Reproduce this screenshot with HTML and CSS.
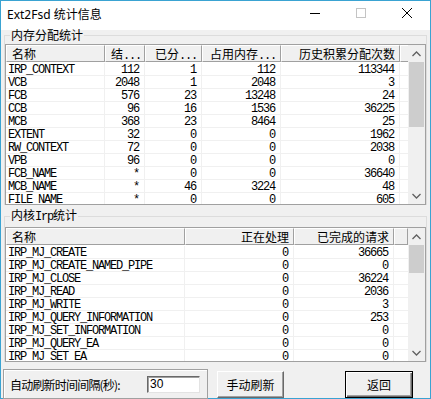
FILE: index.html
```html
<!DOCTYPE html>
<html lang="zh-CN">
<head>
    <meta charset="UTF-8">
    <title>Ext2Fsd 统计信息</title>
    <link rel="stylesheet" href="styles.css">
</head>
<body>
<div class="window">
    <!-- Title bar -->
    <div class="titlebar">
        <div class="title">Ext2Fsd 统计信息</div>
        <div class="caption-btn">
            <svg width="46" height="29"><path d="M18 12.5H28" stroke="#000" stroke-width="1"/></svg>
        </div>
        <div class="caption-btn">
            <svg width="46" height="29"><rect x="18.5" y="7.5" width="9" height="9" fill="none" stroke="#c4c4c4"/></svg>
        </div>
        <div class="caption-btn">
            <svg width="46" height="29"><path d="M18 7L28 17M28 7L18 17" stroke="#000" stroke-width="1"/></svg>
        </div>
    </div>

    <!-- Memory allocation -->
    <fieldset class="group group-mem">
        <legend>内存分配统计</legend>
        <div class="list list-mem">
            <div class="list-body">
                <div class="head">
                    <div class="hc col-name">名称</div>
                    <div class="hc num col-size">结<span class="dots">...</span></div>
                    <div class="hc num col-count">已分<span class="dots">...</span></div>
                    <div class="hc num col-mem">占用内存<span class="dots">...</span></div>
                    <div class="hc num col-total">历史积累分配次数</div>
                    <div class="hc fill"></div>
                </div>
                <div class="row"><div class="cell col-name">IRP_CONTEXT</div><div class="cell num col-size">112</div><div class="cell num col-count">1</div><div class="cell num col-mem">112</div><div class="cell num col-total">113344</div></div>
                <div class="row"><div class="cell col-name">VCB</div><div class="cell num col-size">2048</div><div class="cell num col-count">1</div><div class="cell num col-mem">2048</div><div class="cell num col-total">3</div></div>
                <div class="row"><div class="cell col-name">FCB</div><div class="cell num col-size">576</div><div class="cell num col-count">23</div><div class="cell num col-mem">13248</div><div class="cell num col-total">24</div></div>
                <div class="row"><div class="cell col-name">CCB</div><div class="cell num col-size">96</div><div class="cell num col-count">16</div><div class="cell num col-mem">1536</div><div class="cell num col-total">36225</div></div>
                <div class="row"><div class="cell col-name">MCB</div><div class="cell num col-size">368</div><div class="cell num col-count">23</div><div class="cell num col-mem">8464</div><div class="cell num col-total">25</div></div>
                <div class="row"><div class="cell col-name">EXTENT</div><div class="cell num col-size">32</div><div class="cell num col-count">0</div><div class="cell num col-mem">0</div><div class="cell num col-total">1962</div></div>
                <div class="row"><div class="cell col-name">RW_CONTEXT</div><div class="cell num col-size">72</div><div class="cell num col-count">0</div><div class="cell num col-mem">0</div><div class="cell num col-total">2038</div></div>
                <div class="row"><div class="cell col-name">VPB</div><div class="cell num col-size">96</div><div class="cell num col-count">0</div><div class="cell num col-mem">0</div><div class="cell num col-total">0</div></div>
                <div class="row"><div class="cell col-name">FCB_NAME</div><div class="cell num col-size">*</div><div class="cell num col-count">0</div><div class="cell num col-mem">0</div><div class="cell num col-total">36640</div></div>
                <div class="row"><div class="cell col-name">MCB_NAME</div><div class="cell num col-size">*</div><div class="cell num col-count">46</div><div class="cell num col-mem">3224</div><div class="cell num col-total">48</div></div>
                <div class="row"><div class="cell col-name">FILE_NAME</div><div class="cell num col-size">*</div><div class="cell num col-count">0</div><div class="cell num col-mem">0</div><div class="cell num col-total">605</div></div>
            </div>
            <div class="vscroll">
                <div class="arrow"><svg width="9" height="6"><path d="M0.5 5L4.5 1L8.5 5" fill="none" stroke="#606060" stroke-width="1.3"/></svg></div>
                <div class="track"><div class="thumb"></div></div>
                <div class="arrow"><svg width="9" height="6"><path d="M0.5 1L4.5 5L8.5 1" fill="none" stroke="#606060" stroke-width="1.3"/></svg></div>
            </div>
        </div>
    </fieldset>

    <!-- Kernel IRP -->
    <fieldset class="group group-irp">
        <legend>内核<span class="mono">Irp</span>统计</legend>
        <div class="list list-irp">
            <div class="list-body">
                <div class="head">
                    <div class="hc col-irp">名称</div>
                    <div class="hc num col-busy">正在处理</div>
                    <div class="hc num col-done">已完成的请求</div>
                    <div class="hc fill"></div>
                </div>
                <div class="row"><div class="cell col-irp">IRP_MJ_CREATE</div><div class="cell num col-busy">0</div><div class="cell num col-done">36665</div></div>
                <div class="row"><div class="cell col-irp">IRP_MJ_CREATE_NAMED_PIPE</div><div class="cell num col-busy">0</div><div class="cell num col-done">0</div></div>
                <div class="row"><div class="cell col-irp">IRP_MJ_CLOSE</div><div class="cell num col-busy">0</div><div class="cell num col-done">36224</div></div>
                <div class="row"><div class="cell col-irp">IRP_MJ_READ</div><div class="cell num col-busy">0</div><div class="cell num col-done">2036</div></div>
                <div class="row"><div class="cell col-irp">IRP_MJ_WRITE</div><div class="cell num col-busy">0</div><div class="cell num col-done">3</div></div>
                <div class="row"><div class="cell col-irp">IRP_MJ_QUERY_INFORMATION</div><div class="cell num col-busy">0</div><div class="cell num col-done">253</div></div>
                <div class="row"><div class="cell col-irp">IRP_MJ_SET_INFORMATION</div><div class="cell num col-busy">0</div><div class="cell num col-done">0</div></div>
                <div class="row"><div class="cell col-irp">IRP_MJ_QUERY_EA</div><div class="cell num col-busy">0</div><div class="cell num col-done">0</div></div>
                <div class="row"><div class="cell col-irp">IRP_MJ_SET_EA</div><div class="cell num col-busy">0</div><div class="cell num col-done">0</div></div>
            </div>
            <div class="vscroll">
                <div class="arrow"><svg width="9" height="6"><path d="M0.5 5L4.5 1L8.5 5" fill="none" stroke="#606060" stroke-width="1.3"/></svg></div>
                <div class="track"><div class="thumb"></div></div>
                <div class="arrow"><svg width="9" height="6"><path d="M0.5 1L4.5 5L8.5 1" fill="none" stroke="#606060" stroke-width="1.3"/></svg></div>
            </div>
        </div>
    </fieldset>

    <!-- Bottom controls -->
    <div class="bottom">
        <div class="interval">
            <label for="interval">自动刷新时间间隔(秒):</label>
            <input type="text" id="interval" value="30">
        </div>
        <button class="btn btn-refresh">手动刷新</button>
        <button class="btn btn-back">返回</button>
    </div>
</div>
</body>
</html>
```

FILE: styles.css
```css
body {
    margin: 0;
    font-family: "Noto Sans CJK SC", sans-serif;
    font-size: 12px;
    color: #000;
}
.window {
    width: 431px;
    height: 399px;
    box-sizing: border-box;
    border: 1px solid #3aa3d2;
    background: #f0f0f0;
    display: flex;
    flex-direction: column;
}
.titlebar {
    height: 29px;
    flex-shrink: 0;
    background: #fff;
    display: flex;
}
.title {
    flex: 1;
    display: flex;
    align-items: center;
    padding: 0 0 4px 6px;
    font-family: "Noto Sans", "Noto Sans CJK SC", sans-serif;
    font-size: 12px;
}
.caption-btn {
    width: 46px;
    height: 29px;
}
.caption-btn svg {
    display: block;
}
.group {
    margin: -2px 3px 0;
    padding: 2px 0 0;
    border: 1px solid #dcdcdc;
    border-bottom: none;
    min-width: 0;
}
.group-irp {
    margin-top: 3px;
    padding-top: 3px;
}
legend {
    padding: 0 1px;
    margin-left: 5px;
    font-size: 12px;
    line-height: 14px;
}
.mono, .dots {
    font-family: "Liberation Mono", monospace;
    letter-spacing: -1.2px;
}
.list {
    display: flex;
    box-sizing: border-box;
    border: 1px solid #a0a0a0;
    background: #fff;
}
.list-mem {
    height: 161px;
}
.list-irp {
    height: 135px;
}
.list-body {
    flex: 1;
    overflow: hidden;
    display: flex;
    flex-direction: column;
}
.head {
    display: flex;
    height: 17px;
    flex-shrink: 0;
    margin-bottom: 1px;
    background: #f0f0f0;
}
.hc {
    box-sizing: border-box;
    height: 17px;
    flex-shrink: 0;
    border: 1px solid;
    border-color: #fff #a0a0a0 #a0a0a0 #fff;
    padding: 0 4px 0 5px;
    line-height: 15px;
    white-space: nowrap;
}
.hc.fill {
    flex: 1;
}
.num {
    text-align: right;
}
.row {
    display: flex;
    height: 13px;
    flex-shrink: 0;
    box-sizing: border-box;
    border-bottom: 1px solid #f0f0f0;
}
.cell {
    box-sizing: border-box;
    flex-shrink: 0;
    border-right: 1px solid #f0f0f0;
    padding: 0 2px;
    font-family: "Liberation Mono", monospace;
    font-size: 12px;
    letter-spacing: -1.2px;
    line-height: 14px;
    white-space: nowrap;
}
.cell.num {
    padding-right: 5px;
}
.col-name { width: 99px; }
.col-size { width: 40px; }
.col-count { width: 57px; }
.col-mem { width: 79px; }
.col-total { width: 119px; }
.col-irp { width: 179px; }
.col-busy { width: 109px; }
.col-done { width: 100px; }
.vscroll {
    width: 17px;
    flex-shrink: 0;
    background: #f0f0f0;
    display: flex;
    flex-direction: column;
}
.arrow {
    height: 17px;
    flex-shrink: 0;
    display: flex;
    align-items: center;
    justify-content: center;
}
.arrow svg {
    display: block;
}
.track {
    flex: 1;
}
.thumb {
    margin: 0 1px;
    background: #cdcdcd;
}
.list-mem .thumb {
    height: 65px;
}
.list-irp .thumb {
    height: 28px;
}
.bottom {
    display: flex;
    align-items: center;
    height: 30px;
    flex-shrink: 0;
    margin-top: 7px;
    padding: 0 2px;
}
.interval {
    box-sizing: border-box;
    width: 205px;
    height: 30px;
    display: flex;
    align-items: center;
    padding: 0 7px 0 6px;
    border: 1px solid #a0a0a0;
    box-shadow: inset 1px 1px #fff;
}
.interval label {
    letter-spacing: -0.8px;
}
.interval input {
    box-sizing: border-box;
    width: 53px;
    height: 17px;
    margin-left: auto;
    padding: 0 2px;
    border: 1px solid;
    border-color: #696969 #e3e3e3 #e3e3e3 #696969;
    box-shadow: inset 1px 1px #a0a0a0;
    background: #fff;
    font-family: "Liberation Sans", sans-serif;
    font-size: 12px;
    outline: none;
}
.btn {
    box-sizing: border-box;
    height: 27px;
    width: 67px;
    padding: 0;
    background: #f0f0f0;
    border: 1px solid;
    border-color: #fff #696969 #696969 #fff;
    box-shadow: inset -1px -1px #a0a0a0;
    font-family: "Noto Sans CJK SC", sans-serif;
    font-size: 12px;
    color: #000;
}
.btn-refresh {
    margin-left: 9px;
}
.btn-back {
    width: 68px;
    margin-left: auto;
    margin-right: 15px;
    border: 1px solid #000;
    box-shadow: inset 1px 1px #fff, inset -1px -1px #696969, inset -2px -2px #a0a0a0;
}
```
